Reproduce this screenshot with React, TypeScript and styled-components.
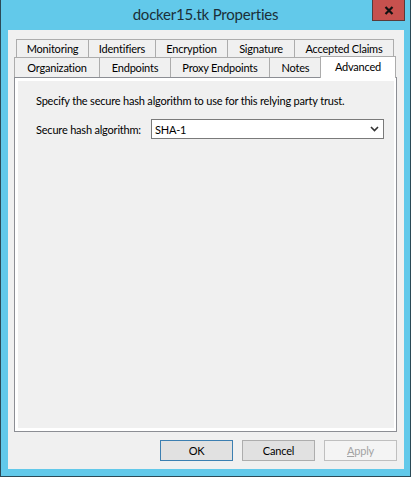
import React from 'react'
import styled, { createGlobalStyle } from 'styled-components'

const GlobalStyle = createGlobalStyle`
  html, body {
    margin: 0;
    padding: 0;
    background: #ffffff;
  }
  * {
    box-sizing: border-box;
  }
`

const Window = styled.div`
  width: 411px;
  height: 477px;
  border: 1px solid #2b4a57;
  border-top: none;
  background: #62c9ea;
  display: flex;
  flex-direction: column;
  font-family: Lato, "Liberation Sans", sans-serif;
  font-size: 11px;
  letter-spacing: -0.2px;
  color: #000;
`

const TitleBar = styled.div`
  height: 30px;
  display: grid;
  grid-template-columns: 1fr auto 1fr;
  align-items: start;
`

const Title = styled.div`
  grid-column: 2;
  margin-top: 5px;
  font-size: 15px;
  color: #1b2f38;
`

const CloseButton = styled.div`
  grid-column: 3;
  justify-self: end;
  margin-right: 5px;
  width: 33px;
  height: 21px;
  background: #c7514e;
  border: 1px solid #5a3a3a;
  border-top: none;
  display: flex;
  align-items: center;
  justify-content: center;
`

const Client = styled.div`
  flex: 1;
  margin: 0 6px 7px 7px;
  background: #f0f0f0;
  display: flex;
  flex-direction: column;
  padding: 9px 7px 8px 6px;
`

const TabStrip = styled.div`
  display: flex;
  flex-direction: column;
`

const TabRow = styled.div<{ $offset: number }>`
  display: flex;
  height: ${p => (p.$offset ? 18 : 20)}px;
  padding-left: ${p => p.$offset}px;
  align-items: flex-end;
`

const Tab = styled.div<{ $w: number }>`
  width: ${p => p.$w}px;
  height: 100%;
  border: 1px solid #acacac;
  border-bottom: none;
  margin-right: -1px;
  background: #f0f0f0;
  display: flex;
  align-items: center;
  justify-content: center;
  white-space: nowrap;
`

const ActiveTab = styled.div<{ $w: number }>`
  width: ${p => p.$w}px;
  height: 22px;
  margin-left: -1px;
  margin-bottom: -1px;
  position: relative;
  z-index: 1;
  border: 1px solid #acacac;
  border-bottom: none;
  background: #ffffff;
  display: flex;
  align-items: flex-start;
  padding-top: 3px;
  justify-content: center;
  white-space: nowrap;
`

const Panel = styled.div`
  flex: 1;
  border: 1px solid #8c8e94;
  background: #ffffff;
  padding: 3px;
  display: flex;
`

const PanelInner = styled.div`
  flex: 1;
  background: #f0f0f0;
  padding: 12px 10px 0 18px;
  display: flex;
  flex-direction: column;
  gap: 11px;
`

const Line = styled.div`
  line-height: 15px;
  white-space: nowrap;
`

const FieldRow = styled.div`
  display: flex;
  align-items: center;
`

const FieldLabel = styled.div`
  width: 115px;
  white-space: nowrap;
`

const SelectBox = styled.div`
  width: 233px;
  height: 20px;
  border: 1px solid #7a7a7a;
  background: #ffffff;
  display: flex;
  align-items: center;
  justify-content: space-between;
  padding: 0 4px 0 3px;
`

const ButtonRow = styled.div`
  display: flex;
  justify-content: flex-end;
  gap: 9px;
  margin-top: 8px;
`

const Button = styled.div<{ $variant?: 'default' | 'disabled' }>`
  width: 73px;
  height: 21px;
  display: flex;
  align-items: center;
  justify-content: center;
  border: 1px solid
    ${p => (p.$variant === 'default' ? '#3c7fb1' : p.$variant === 'disabled' ? '#bfbfbf' : '#adadad')};
  background: ${p => (p.$variant === 'disabled' ? '#f4f4f4' : '#e1e1e1')};
  color: ${p => (p.$variant === 'disabled' ? '#a3a3a3' : '#000')};
`

const Mnemonic = styled.span`
  text-decoration: underline;
`

const row1 = [
  { label: 'Monitoring', w: 73 },
  { label: 'Identifiers', w: 68 },
  { label: 'Encryption', w: 73 },
  { label: 'Signature', w: 68 },
  { label: 'Accepted Claims', w: 100 },
]

const row2 = [
  { label: 'Organization', w: 86 },
  { label: 'Endpoints', w: 72 },
  { label: 'Proxy Endpoints', w: 100 },
  { label: 'Notes', w: 53 },
]

function App() {
  return (
    <>
      <GlobalStyle />
      <Window>
        <TitleBar>
          <Title>docker15.tk Properties</Title>
          <CloseButton>
            <svg width="10" height="9" viewBox="0 0 10 9">
              <path d="M1.5 1 L8.5 8 M8.5 1 L1.5 8" stroke="#111" strokeWidth="2.2" />
            </svg>
          </CloseButton>
        </TitleBar>
        <Client>
          <TabStrip>
            <TabRow $offset={2}>
              {row1.map(t => (
                <Tab key={t.label} $w={t.w}>{t.label}</Tab>
              ))}
            </TabRow>
            <TabRow $offset={0}>
              {row2.map(t => (
                <Tab key={t.label} $w={t.w}>{t.label}</Tab>
              ))}
              <ActiveTab $w={76}>Advanced</ActiveTab>
            </TabRow>
          </TabStrip>
          <Panel>
            <PanelInner>
              <Line>Specify the secure hash algorithm to use for this relying party trust.</Line>
              <FieldRow>
                <FieldLabel>Secure hash algorithm:</FieldLabel>
                <SelectBox>
                  <span>SHA-1</span>
                  <svg width="9" height="6" viewBox="0 0 9 6">
                    <path d="M1 1 L4.5 4.5 L8 1" fill="none" stroke="#333" strokeWidth="1.6" />
                  </svg>
                </SelectBox>
              </FieldRow>
            </PanelInner>
          </Panel>
          <ButtonRow>
            <Button $variant="default">OK</Button>
            <Button>Cancel</Button>
            <Button $variant="disabled"><Mnemonic>A</Mnemonic>pply</Button>
          </ButtonRow>
        </Client>
      </Window>
    </>
  )
}

export default App
